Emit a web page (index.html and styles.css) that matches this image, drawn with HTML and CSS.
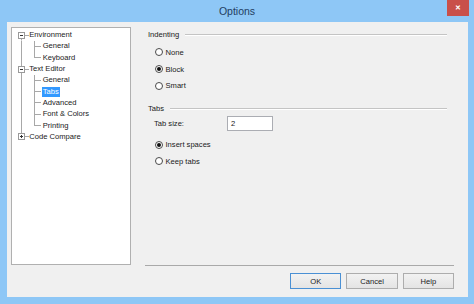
FILE: index.html
```html
<!DOCTYPE html>
<html>
<head>
<meta charset="utf-8">
<title>Options</title>
<link rel="stylesheet" href="styles.css">
</head>
<body>
<div class="window">
  <div class="titlebar">
    <div class="title">Options</div>
    <div class="close">&#x2715;</div>
  </div>
  <div class="client">
    <div class="main">
      <div class="tree">
        <div class="row"><span class="g g-root first"><span class="box minus"></span></span><span class="label">Environment</span></div>
        <div class="row"><span class="g g-pass"></span><span class="c c-mid"></span><span class="label">General</span></div>
        <div class="row"><span class="g g-pass"></span><span class="c c-last"></span><span class="label">Keyboard</span></div>
        <div class="row"><span class="g g-root mid"><span class="box minus"></span></span><span class="label">Text Editor</span></div>
        <div class="row"><span class="g g-pass"></span><span class="c c-mid"></span><span class="label">General</span></div>
        <div class="row"><span class="g g-pass"></span><span class="c c-mid"></span><span class="label selected">Tabs</span></div>
        <div class="row"><span class="g g-pass"></span><span class="c c-mid"></span><span class="label">Advanced</span></div>
        <div class="row"><span class="g g-pass"></span><span class="c c-mid"></span><span class="label">Font &amp; Colors</span></div>
        <div class="row"><span class="g g-pass"></span><span class="c c-last"></span><span class="label">Printing</span></div>
        <div class="row"><span class="g g-root last"><span class="box plus"></span></span><span class="label">Code Compare</span></div>
      </div>
      <div class="panel">
        <div class="group-head head-indent"><span>Indenting</span></div>
        <div class="opts opts-indent">
          <div class="opt"><span class="radio"></span><span>None</span></div>
          <div class="opt"><span class="radio checked"></span><span>Block</span></div>
          <div class="opt"><span class="radio"></span><span>Smart</span></div>
        </div>
        <div class="group-head head-tabs"><span>Tabs</span></div>
        <div class="field">
          <span class="field-label">Tab size:</span>
          <span class="input">2</span>
        </div>
        <div class="opts opts-tabs">
          <div class="opt"><span class="radio checked"></span><span>Insert spaces</span></div>
          <div class="opt"><span class="radio"></span><span>Keep tabs</span></div>
        </div>
      </div>
    </div>
    <div class="footer">
      <div class="buttons">
        <div class="btn default">OK</div>
        <div class="btn">Cancel</div>
        <div class="btn">Help</div>
      </div>
    </div>
  </div>
</div>
</body>
</html>
```
FILE: styles.css
```css
* { box-sizing: border-box; }
html, body { margin: 0; padding: 0; }
body {
  width: 474px;
  height: 304px;
  overflow: hidden;
  font-family: "Liberation Sans", Arial, sans-serif;
  font-size: 7.6px;
  color: #111;
}
.window {
  width: 474px;
  height: 304px;
  background: #8ec7f6;
  display: flex;
  flex-direction: column;
}
.titlebar {
  height: 22px;
  flex-shrink: 0;
  display: grid;
  grid-template-columns: 1fr auto 1fr;
  align-items: start;
}
.title {
  grid-column: 2;
  line-height: 22px;
  font-size: 10.5px;
  color: #1f3d62;
}
.close {
  grid-column: 3;
  justify-self: end;
  width: 22px;
  height: 16px;
  margin-right: 5px;
  background: #c9504a;
  color: #fff;
  font-size: 7px;
  font-weight: bold;
  display: flex;
  align-items: center;
  justify-content: center;
}
.client {
  flex: 1;
  margin: 0 6px 7px 7px;
  background: #f0f0f0;
  display: flex;
  flex-direction: column;
}
.main {
  height: 243px;
  display: flex;
  padding: 5px 0 0 4px;
}
.tree {
  width: 120px;
  height: 238px;
  flex-shrink: 0;
  background: #fff;
  border: 1px solid #b0b0b0;
  padding-top: 1.5px;
  --ln: #a8a8a8;
}
.row {
  height: 11.3px;
  display: flex;
  align-items: center;
  white-space: nowrap;
}
.g {
  width: 17.3px;
  height: 100%;
  flex-shrink: 0;
  display: flex;
  align-items: center;
  background-repeat: no-repeat;
}
.g-root.first {
  background-image: linear-gradient(var(--ln), var(--ln)), linear-gradient(var(--ln), var(--ln));
  background-position: 13px 50%, 9px 100%;
  background-size: 4px 1px, 1px 50%;
}
.g-root.mid {
  background-image: linear-gradient(var(--ln), var(--ln)), linear-gradient(var(--ln), var(--ln));
  background-position: 13px 50%, 9px 0;
  background-size: 4px 1px, 1px 100%;
}
.g-root.last {
  background-image: linear-gradient(var(--ln), var(--ln)), linear-gradient(var(--ln), var(--ln));
  background-position: 13px 50%, 9px 0;
  background-size: 4px 1px, 1px 50%;
}
.g-pass {
  background-image: linear-gradient(var(--ln), var(--ln));
  background-position: 9px 0;
  background-size: 1px 100%;
}
.box {
  width: 7px;
  height: 7px;
  margin-left: 6px;
  border: 1px solid #9a9a9a;
  background: #fff;
  display: flex;
  align-items: center;
  justify-content: center;
  position: relative;
}
.box::before {
  content: "";
  width: 3px;
  height: 1px;
  background: #333;
}
.box.plus::after {
  content: "";
  width: 1px;
  height: 3px;
  background: #333;
  position: absolute;
  left: 2px;
  top: 1px;
}
.c {
  width: 13.4px;
  height: 100%;
  flex-shrink: 0;
  background-repeat: no-repeat;
  background-image: linear-gradient(var(--ln), var(--ln)), linear-gradient(var(--ln), var(--ln));
  background-position: 5px 50%, 5px 0;
}
.c-mid { background-size: 7px 1px, 1px 100%; }
.c-last { background-size: 7px 1px, 1px 50%; }
.label {
  line-height: 10px;
  height: 10px;
  color: #1a1a1a;
}
.label.selected {
  background: #3399ff;
  color: #fff;
  margin-left: -1px;
  padding: 0 1.3px 0 1px;
}
.panel {
  flex: 1;
  margin-left: 17px;
  margin-right: 21px;
  display: flex;
  flex-direction: column;
}
.group-head {
  height: 12px;
  display: flex;
  align-items: center;
  color: #1a1a1a;
}
.group-head::after {
  content: "";
  flex: 1;
  height: 1px;
  margin-left: 6px;
  background: #c4c4c4;
  box-shadow: 0 1px 0 #fff;
}
.head-indent { margin-top: 1px; }
.head-tabs { margin-top: 8.2px; }
.opts-indent { margin-top: 4px; }
.opts-tabs { margin-top: 4.85px; }
.opt {
  height: 16.7px;
  display: flex;
  align-items: center;
  padding-left: 7px;
  gap: 2.5px;
  color: #1a1a1a;
}
.radio {
  width: 8px;
  height: 8px;
  border-radius: 50%;
  border: 1px solid #4a4a4a;
  background: #fff;
  display: flex;
  align-items: center;
  justify-content: center;
}
.radio.checked::before {
  content: "";
  width: 4px;
  height: 4px;
  border-radius: 50%;
  background: #111;
}
.field {
  height: 15px;
  margin-top: 2.2px;
  display: flex;
  align-items: center;
  padding-left: 6px;
  color: #1a1a1a;
}
.field-label { width: 73px; }
.input {
  width: 46px;
  height: 15px;
  border: 1px solid #abadb3;
  background: #fff;
  padding-left: 3px;
  display: flex;
  align-items: center;
}
.footer {
  flex: 1;
  padding: 0 14px 0 138px;
}
.buttons {
  border-top: 1px solid #a9a9a9;
  padding-top: 7px;
  display: flex;
  justify-content: flex-end;
  gap: 5px;
}
.btn {
  width: 51.3px;
  height: 16px;
  border: 1px solid #adadad;
  background: linear-gradient(#f2f2f2, #e4e4e4);
  display: flex;
  align-items: center;
  justify-content: center;
  color: #1a1a1a;
}
.btn.default {
  border-color: #4a90d4;
}
```
